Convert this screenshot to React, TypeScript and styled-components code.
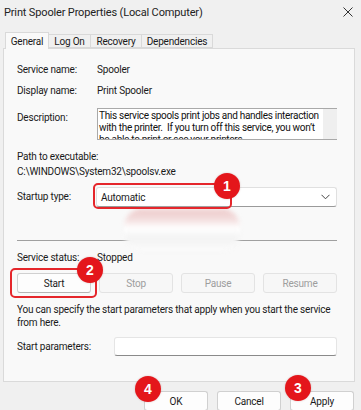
import React from 'react';
import styled, {createGlobalStyle} from "styled-components";

const GlobalStyle = createGlobalStyle`
    body {
        margin: 0;
        background: #f0f0f0;
        font-family: Roboto, "Liberation Sans", sans-serif;
        font-size: 10px;
        letter-spacing: -0.2px;
        color: #1a1a1a;
    }
`;

const Window = styled.div`
    position: relative;
    width: 361px;
    height: 410px;
    overflow: hidden;
    background: #f0f0f0;
`;

const TitleBar = styled.div`
    height: 24px;
    display: flex;
    align-items: center;
    justify-content: space-between;
    padding: 0 8px 0 4px;
    font-size: 11px;
    letter-spacing: -0.15px;
    color: #222;
`;

const CloseIcon = () => (
    <svg width="10" height="10" viewBox="0 0 10 10">
        <path d="M0.5 0.5 L9.5 9.5 M9.5 0.5 L0.5 9.5" stroke="#333" strokeWidth="1" fill="none"/>
    </svg>
);

const TabStrip = styled.div`
    display: flex;
    align-items: flex-end;
    height: 16px;
    margin: 8px 0 0 5px;
    position: relative;
    z-index: 1;
`;

const Tab = styled.div<{ $active?: boolean; $w: number }>`
    width: ${p => p.$w}px;
    height: ${p => p.$active ? 17 : 14}px;
    margin-bottom: ${p => p.$active ? -1 : 0}px;
    display: flex;
    align-items: center;
    justify-content: center;
    border: 1px solid #d9d9d9;
    border-bottom: ${p => p.$active ? 'none' : '1px solid #d9d9d9'};
    border-left: ${p => p.$active ? '1px solid #d9d9d9' : 'none'};
    background: ${p => p.$active ? '#f9f9f9' : '#f0f0f0'};
    box-sizing: border-box;
    font-size: 10px;
    color: #1a1a1a;
`;

const Panel = styled.div`
    position: relative;
    margin: 0 6px 0 3px;
    height: 334px;
    box-sizing: border-box;
    border: 1px solid #dadada;
    background: #f9f9f9;
    padding: 0 17px 0 13px;
    display: flex;
    flex-direction: column;
`;

const Row = styled.div<{ $top: number; $h?: number; $align?: string }>`
    position: relative;
    display: flex;
    align-items: ${p => p.$align ?? 'center'};
    margin-top: ${p => p.$top}px;
    height: ${p => p.$h ?? 14}px;
    flex-shrink: 0;
`;

const Label = styled.div<{ $w?: number; $pt?: number }>`
    width: ${p => p.$w ?? 80}px;
    padding-top: ${p => p.$pt ?? 0}px;
    flex-shrink: 0;
    line-height: 14px;
`;

const Value = styled.div`
    line-height: 14px;
`;

const DescBox = styled.div`
    flex: 1;
    height: 32px;
    box-sizing: border-box;
    border: 1px solid #a9a9a9;
    border-right: none;
    background: #fff;
    display: flex;
    overflow: hidden;
`;

const DescText = styled.div`
    flex: 1;
    padding: 1px 0 0 1px;
    line-height: 12px;
    letter-spacing: -0.3px;
    color: #111;
`;

const ScrollTrack = styled.div`
    width: 14px;
    flex-shrink: 0;
    background: #efefef;
`;

const Combo = styled.div`
    flex: 1;
    height: 20px;
    margin-left: -1px;
    box-sizing: border-box;
    background: #fff;
    border: 1px solid #e0e0e0;
    border-bottom-color: #9a9a9a;
    border-radius: 3px;
    display: flex;
    align-items: center;
    justify-content: space-between;
    padding: 0 6px 0 4px;
`;

const Chevron = () => (
    <svg width="9" height="6" viewBox="0 0 9 6">
        <path d="M0.5 0.8 L4.5 4.8 L8.5 0.8" stroke="#444" strokeWidth="1" fill="none"/>
    </svg>
);

const Separator = styled.div`
    margin-top: 33px;
    height: 1px;
    background: #a0a0a0;
    flex-shrink: 0;
`;

const ButtonRow = styled.div`
    position: relative;
    display: flex;
    justify-content: space-between;
    margin-top: 8px;
    height: 20px;
    flex-shrink: 0;
`;

const Button = styled.div<{ $disabled?: boolean; $w?: number }>`
    width: ${p => p.$w ?? 74}px;
    height: 20px;
    box-sizing: border-box;
    border: 1px solid ${p => p.$disabled ? '#e3e3e3' : '#d0d0d0'};
    border-bottom-color: ${p => p.$disabled ? '#e3e3e3' : '#b5b5b5'};
    border-radius: 3px;
    background: ${p => p.$disabled ? '#f7f7f7' : '#fdfdfd'};
    color: ${p => p.$disabled ? '#9d9d9d' : '#1a1a1a'};
    display: flex;
    align-items: center;
    justify-content: center;
    font-size: 10px;
`;

const Paragraph = styled.div`
    margin-top: 10px;
    line-height: 13px;
    flex-shrink: 0;
`;

const TextInput = styled.div`
    flex: 1;
    height: 19px;
    box-sizing: border-box;
    background: #fff;
    border: 1px solid #e5e5e5;
    border-bottom-color: #8a8a8a;
    border-radius: 3px;
`;

const Footer = styled.div`
    display: flex;
    justify-content: flex-end;
    gap: 9px;
    margin: 9px 7px 0 0;
`;

const Anchor = styled.div`
    position: relative;
`;

const Highlight = styled.div<{ $l: number; $t: number; $w: number; $h: number }>`
    position: absolute;
    left: ${p => p.$l}px;
    top: ${p => p.$t}px;
    width: ${p => p.$w}px;
    height: ${p => p.$h}px;
    box-sizing: border-box;
    border: 2px solid #e5262b;
    border-radius: 5px;
    pointer-events: none;
    z-index: 2;
`;

const Badge = styled.div<{ $l: number; $t: number }>`
    position: absolute;
    left: ${p => p.$l}px;
    top: ${p => p.$t}px;
    width: 26px;
    height: 26px;
    border-radius: 50%;
    background: #e4161b;
    color: #fff;
    font-family: "Liberation Sans", Arial, sans-serif;
    font-weight: bold;
    font-size: 14px;
    letter-spacing: 0;
    display: flex;
    align-items: center;
    justify-content: center;
    box-shadow: 0 0 2px rgba(120, 0, 0, 0.25);
    z-index: 3;
`;

const Smudge = styled.div`
    position: absolute;
    left: 120px;
    top: 160px;
    width: 116px;
    height: 42px;
    border-radius: 18px;
    background: linear-gradient(180deg, #eecaca 0%, #f3dede 25%, #ffffff 45%, #f3f3f3 70%, #fbfbfb 100%);
    filter: blur(2px);
    z-index: 1;
`;

export default function App() {
    return (
        <Window>
            <GlobalStyle/>
            <TitleBar>
                <span>Print Spooler Properties (Local Computer)</span>
                <CloseIcon/>
            </TitleBar>
            <TabStrip>
                <Tab $active $w={44}>General</Tab>
                <Tab $w={42}>Log On</Tab>
                <Tab $w={51}>Recovery</Tab>
                <Tab $w={71}>Dependencies</Tab>
            </TabStrip>
            <Panel>
                <Row $top={14}>
                    <Label>Service name:</Label>
                    <Value>Spooler</Value>
                </Row>
                <Row $top={7}>
                    <Label>Display name:</Label>
                    <Value>Print Spooler</Value>
                </Row>
                <Row $top={10} $h={32} $align="flex-start">
                    <Label $pt={3}>Description:</Label>
                    <DescBox>
                        <DescText>
                            This service spools print jobs and handles interaction with the printer.&nbsp; If you turn
                            off this service, you won’t be able to print or see your printers.
                        </DescText>
                        <ScrollTrack/>
                    </DescBox>
                </Row>
                <Row $top={10}>
                    <Value>Path to executable:</Value>
                </Row>
                <Row $top={1}>
                    <Value>C:\WINDOWS\System32\spoolsv.exe</Value>
                </Row>
                <Row $top={8} $h={20}>
                    <Label>Startup type:</Label>
                    <Combo>
                        <span>Automatic</span>
                        <Chevron/>
                    </Combo>
                    <Highlight $l={76} $t={-4} $w={139} $h={26}/>
                    <Badge $l={197} $t={-14}>1</Badge>
                </Row>
                <Smudge/>
                <Separator/>
                <Row $top={10}>
                    <Label>Service status:</Label>
                    <Value>Stopped</Value>
                </Row>
                <ButtonRow>
                    <Button>Start</Button>
                    <Button $disabled>Stop</Button>
                    <Button $disabled>Pause</Button>
                    <Button $disabled>Resume</Button>
                    <Highlight $l={-7} $t={-5} $w={87} $h={30}/>
                    <Badge $l={60} $t={-16}>2</Badge>
                </ButtonRow>
                <Paragraph>
                    You can specify the start parameters that apply when you start the service from here.
                </Paragraph>
                <Row $top={8} $h={19}>
                    <Label $w={97}>Start parameters:</Label>
                    <TextInput/>
                </Row>
            </Panel>
            <Footer>
                <Anchor>
                    <Button $w={64}>OK</Button>
                    <Badge $l={-9} $t={-15}>4</Badge>
                </Anchor>
                <Button $w={64}>Cancel</Button>
                <Anchor>
                    <Button $w={64}>Apply</Button>
                    <Badge $l={-5} $t={-16}>3</Badge>
                </Anchor>
            </Footer>
        </Window>
    );
}
